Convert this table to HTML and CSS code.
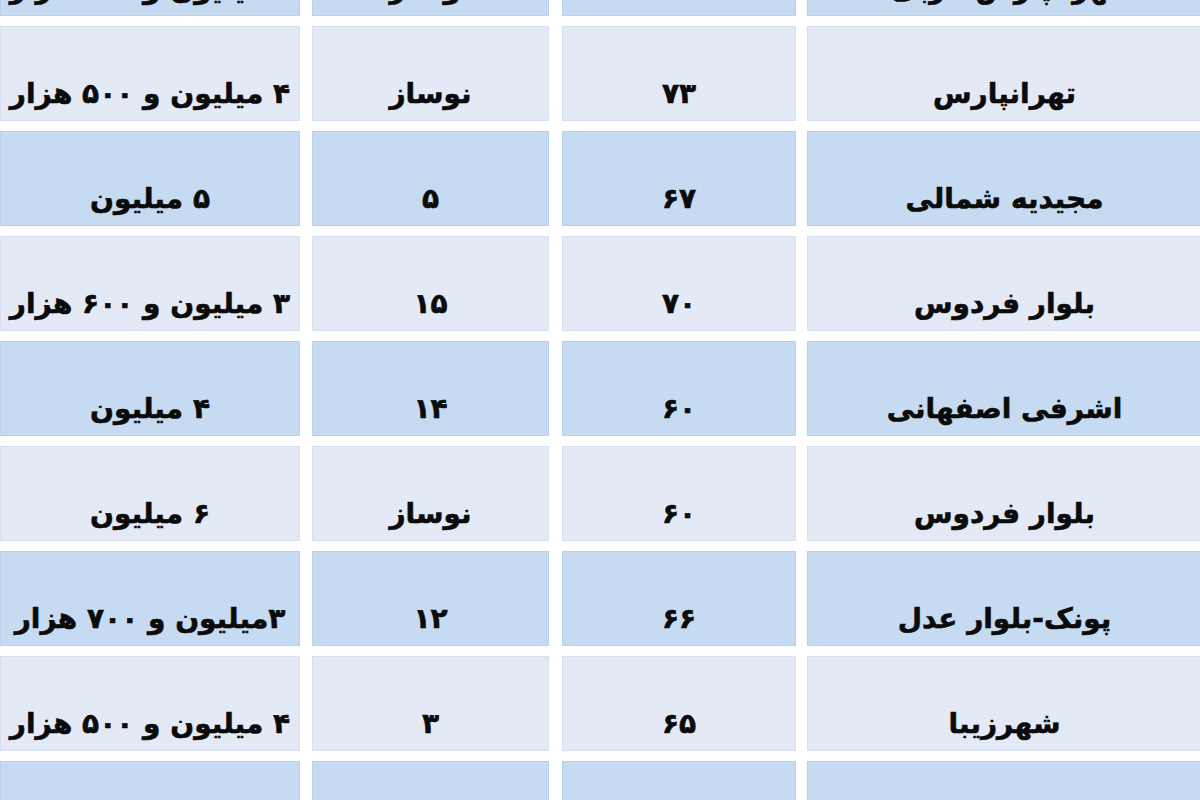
FILE: index.html
```html
<!DOCTYPE html>
<html lang="fa">
<head>
<meta charset="utf-8">
<title>قیمت آپارتمان</title>
<link rel="stylesheet" href="styles.css">
</head>
<body>
<div class="table">
  <div class="row blue">
    <div class="cell c1">۴ میلیون و ۳۰۰ هزار</div>
    <div class="cell c2">نوساز</div>
    <div class="cell c3">۷۵</div>
    <div class="cell c4">تهرانپارس غربی</div>
  </div>
  <div class="row light">
    <div class="cell c1">۴ میلیون و ۵۰۰ هزار</div>
    <div class="cell c2">نوساز</div>
    <div class="cell c3">۷۳</div>
    <div class="cell c4">تهرانپارس</div>
  </div>
  <div class="row blue">
    <div class="cell c1">۵ میلیون</div>
    <div class="cell c2">۵</div>
    <div class="cell c3">۶۷</div>
    <div class="cell c4">مجیدیه شمالی</div>
  </div>
  <div class="row light">
    <div class="cell c1">۳ میلیون و ۶۰۰ هزار</div>
    <div class="cell c2">۱۵</div>
    <div class="cell c3">۷۰</div>
    <div class="cell c4">بلوار فردوس</div>
  </div>
  <div class="row blue">
    <div class="cell c1">۴ میلیون</div>
    <div class="cell c2">۱۴</div>
    <div class="cell c3">۶۰</div>
    <div class="cell c4">اشرفی اصفهانی</div>
  </div>
  <div class="row light">
    <div class="cell c1">۶ میلیون</div>
    <div class="cell c2">نوساز</div>
    <div class="cell c3">۶۰</div>
    <div class="cell c4">بلوار فردوس</div>
  </div>
  <div class="row blue">
    <div class="cell c1">۳میلیون و ۷۰۰ هزار</div>
    <div class="cell c2">۱۲</div>
    <div class="cell c3">۶۶</div>
    <div class="cell c4">پونک-بلوار عدل</div>
  </div>
  <div class="row light">
    <div class="cell c1">۴ میلیون و ۵۰۰ هزار</div>
    <div class="cell c2">۳</div>
    <div class="cell c3">۶۵</div>
    <div class="cell c4">شهرزیبا</div>
  </div>
  <div class="row blue">
    <div class="cell c1">۳ میلیون و ۸۰۰ هزار</div>
    <div class="cell c2">۱۰</div>
    <div class="cell c3">۶۸</div>
    <div class="cell c4">ستارخان-کوی نصر</div>
  </div>
</div>
</body>
</html>
```

FILE: styles.css
```css
html, body {
  margin: 0;
  padding: 0;
  background: #ffffff;
  width: 1200px;
  height: 800px;
  overflow: hidden;
}

.table {
  margin-top: -79px;
  display: flex;
  flex-direction: column;
  gap: 10px;
  font-family: "DejaVu Sans", "Noto Sans", sans-serif;
  font-weight: bold;
  color: #0b0b0b;
}

.row {
  display: grid;
  grid-template-columns: 300px 237px 235px 394px;
  column-gap: 12px;
  height: 95px;
}

.row .c3 { margin-left: 1px; }
.row .c4 { margin-left: -1px; }

.cell {
  direction: rtl;
  display: flex;
  align-items: center;
  justify-content: center;
  padding-top: 40px;
  box-sizing: border-box;
  font-size: 28px;
  white-space: nowrap;
  -webkit-text-stroke: 0.6px #0b0b0b;
}

.light .cell {
  background: #e3eaf6;
  box-shadow: inset 0 0 0 1px #d5dff0;
}

.blue .cell {
  background: #c6daf2;
  box-shadow: inset 0 0 0 1px #b9cfea;
}
```
